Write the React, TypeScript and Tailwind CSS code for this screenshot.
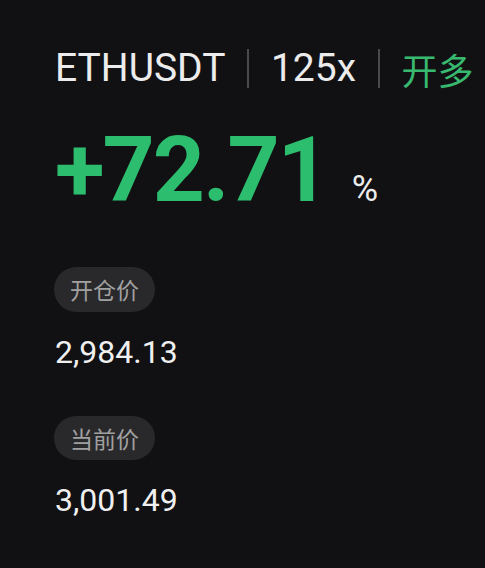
export default function App() {
  const font = { fontFamily: 'Roboto, "Noto Sans CJK SC", sans-serif' };
  const cjk = { fontFamily: '"Noto Sans CJK SC", sans-serif' };
  return (
    <div className="w-[485px] h-[568px] bg-[#111113] overflow-hidden pl-[55px]" style={font}>
      <div className="flex items-center pt-[49px] leading-none">
        <span className="text-[39px] text-[#ececec] leading-none">ETHUSDT</span>
        <span className="w-[1.5px] h-[39px] bg-[#4a4a4d] mx-[22px]" />
        <span className="text-[39px] text-[#ececec] leading-none">125x</span>
        <span className="w-[1.5px] h-[39px] bg-[#4a4a4d] mx-[22px]" />
        <span className="text-[36px] text-[#38b970] leading-none" style={cjk}>开多</span>
      </div>
      <div className="flex items-baseline mt-[37px] leading-none">
        <span className="text-[91px] font-bold text-[#2dbd6e] leading-none tracking-[-2px]">+72.71</span>
        <span className="text-[36px] text-[#ececec] ml-[24px] leading-none">%</span>
      </div>
      <div className="mt-[51px] flex flex-col items-start">
        <span className="h-[45px] w-[101px] rounded-full bg-[#29292c] text-[#a0a0a0] text-[23px] flex items-center justify-center -ml-[1px]" style={cjk}>开仓价</span>
        <span className="mt-[24px] text-[32px] text-[#f0f0f0] leading-none">2,984.13</span>
        <span className="mt-[48px] h-[44px] w-[101px] rounded-full bg-[#29292c] text-[#a0a0a0] text-[23px] flex items-center justify-center -ml-[1px]" style={cjk}>当前价</span>
        <span className="mt-[24px] text-[32px] text-[#f0f0f0] leading-none">3,001.49</span>
      </div>
    </div>
  );
}
